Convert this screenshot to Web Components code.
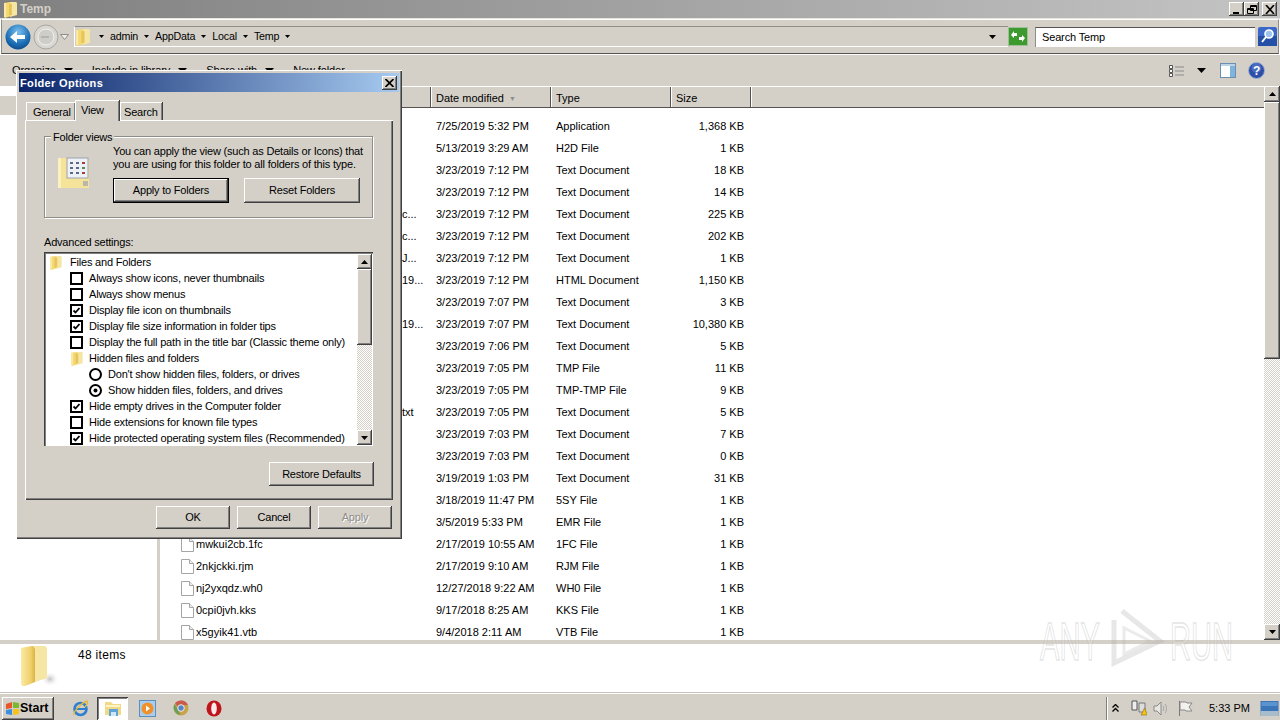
<!DOCTYPE html>
<html>
<head>
<meta charset="utf-8">
<title>Temp</title>
<style>
  html, body { margin: 0; height: 720px; overflow: hidden; background: #fff; }
  body { font: 11px/13px "Liberation Sans", Arial, sans-serif; color: #000; }
</style>
</head>
<body>
<explorer-window>
  <win-titlebar slot="title">Temp</win-titlebar>
  <address-bar></address-bar>
  <command-bar></command-bar>
  <file-list></file-list>
  <details-pane>48 items</details-pane>
  <task-bar></task-bar>
</explorer-window>
<folder-options>
  <opt-row kind="folder" root>Files and Folders</opt-row>
  <opt-row kind="check">Always show icons, never thumbnails</opt-row>
  <opt-row kind="check">Always show menus</opt-row>
  <opt-row kind="check" checked>Display file icon on thumbnails</opt-row>
  <opt-row kind="check" checked>Display file size information in folder tips</opt-row>
  <opt-row kind="check">Display the full path in the title bar (Classic theme only)</opt-row>
  <opt-row kind="folder">Hidden files and folders</opt-row>
  <opt-row kind="radio">Don't show hidden files, folders, or drives</opt-row>
  <opt-row kind="radio" checked>Show hidden files, folders, and drives</opt-row>
  <opt-row kind="check" checked>Hide empty drives in the Computer folder</opt-row>
  <opt-row kind="check">Hide extensions for known file types</opt-row>
  <opt-row kind="check" checked>Hide protected operating system files (Recommended)</opt-row>
</folder-options>
<any-watermark></any-watermark>

<script>
const files = [
  ["", "7/25/2019 5:32 PM", "Application", "1,368 KB"],
  ["", "5/13/2019 3:29 AM", "H2D File", "1 KB"],
  ["", "3/23/2019 7:12 PM", "Text Document", "18 KB"],
  ["", "3/23/2019 7:12 PM", "Text Document", "14 KB"],
  ["c...", "3/23/2019 7:12 PM", "Text Document", "225 KB"],
  ["c...", "3/23/2019 7:12 PM", "Text Document", "202 KB"],
  ["J...", "3/23/2019 7:12 PM", "Text Document", "1 KB"],
  ["19...", "3/23/2019 7:12 PM", "HTML Document", "1,150 KB"],
  ["", "3/23/2019 7:07 PM", "Text Document", "3 KB"],
  ["19...", "3/23/2019 7:07 PM", "Text Document", "10,380 KB"],
  ["", "3/23/2019 7:06 PM", "Text Document", "5 KB"],
  ["", "3/23/2019 7:05 PM", "TMP File", "11 KB"],
  ["", "3/23/2019 7:05 PM", "TMP-TMP File", "9 KB"],
  ["txt", "3/23/2019 7:05 PM", "Text Document", "5 KB"],
  ["", "3/23/2019 7:03 PM", "Text Document", "7 KB"],
  ["", "3/23/2019 7:03 PM", "Text Document", "0 KB"],
  ["", "3/19/2019 1:03 PM", "Text Document", "31 KB"],
  ["", "3/18/2019 11:47 PM", "5SY File", "1 KB"],
  ["", "3/5/2019 5:33 PM", "EMR File", "1 KB"],
  ["mwkui2cb.1fc", "2/17/2019 10:55 AM", "1FC File", "1 KB"],
  ["2nkjckki.rjm", "2/17/2019 9:10 AM", "RJM File", "1 KB"],
  ["nj2yxqdz.wh0", "12/27/2018 9:22 AM", "WH0 File", "1 KB"],
  ["0cpi0jvh.kks", "9/17/2018 8:25 AM", "KKS File", "1 KB"],
  ["x5gyik41.vtb", "9/4/2018 2:11 AM", "VTB File", "1 KB"],
];

const FACE = "#d4d0c8";
const RAISED = "box-shadow: inset -1px -1px #404040, inset 1px 1px #fff, inset -2px -2px #808080;";
const DITHER = "background: repeating-conic-gradient(#fff 0 25%, #d4d0c8 0 50%) 0 0 / 2px 2px;";

const folderSmall = (w = 14, h = 17) => `
  <svg width="${w}" height="${h}" viewBox="0 0 14 17" style="display:block;flex:none">
    <path d="M7 1h6l1 1v12l-7 2z" fill="#f5e6a4"/>
    <path d="M1 2l6-1 1 1v13l-6 2-1-1z" fill="#f4d873"/>
    <path d="M6 3h3v11H6z" fill="#e3b94a" opacity=".7"/>
    <path d="M1 2h2v14H1z" fill="#fbeeb4" opacity=".8"/>
  </svg>`;

const tri = (w = 7, h = 4) => `<svg width="${w}" height="${h}" viewBox="0 0 7 4" preserveAspectRatio="none" style="display:block;flex:none"><path d="M0 0h7L3.500 4z" fill="#000"/></svg>`;

// a plain class that only stamps markup into an open shadow root
class Stamp extends HTMLElement {
  connectedCallback() {
    if (this.shadowRoot) return;
    this.attachShadow({ mode: "open" }).innerHTML = this.markup();
  }
}

class ExplorerWindow extends Stamp {
  markup() {
    return `<style>
      :host { display: flex; flex-direction: column; width: 1280px; height: 720px; }
    </style><slot name="title"></slot><slot></slot>`;
  }
}

class WinTitlebar extends Stamp {
  markup() {
    return `<style>
      :host { display: flex; align-items: center; height: 19px; flex: none; box-sizing: border-box; padding-left: 3px; gap: 3px;
        background: linear-gradient(90deg, #808080, #c4c4c4); border-bottom: 1px solid #e6e4df;
        color: #d4d0c8; font-weight: bold; font-size: 12px; }
      .btns { margin-left: auto; display: flex; margin-right: 3px; }
      .b { width: 15px; height: 14px; background: ${FACE}; ${RAISED} display: flex; align-items: center; justify-content: center; }
      .b:last-child { margin-left: 3px; }
    </style>
    ${folderSmall(14, 17)}<slot></slot>
    <div class="btns">
      <div class="b"><svg width="10" height="9"><path d="M1 7h6v2H1z" fill="#000"/></svg></div>
      <div class="b"><svg width="10" height="9"><path d="M3.500.5h6v5h-6zM3 1.500h7M.5 3.500h6v5h-6zM0 4.500h7" fill="none" stroke="#000"/></svg></div>
      <div class="b"><svg width="10" height="9"><path d="M1 0l8 9M9 0L1 9" stroke="#000" stroke-width="1.600"/></svg></div>
    </div>`;
  }
}

class AddressBar extends Stamp {
  markup() {
    const crumb = (t) => `<span class="tri">${tri(5, 3)}</span><span class="c">${t}</span>`;
    return `<style>
      :host { display: flex; align-items: center; height: 35px; flex: none; margin: 0 1px; box-sizing: border-box;
        background: ${FACE}; border: 1px solid #8f8d88; border-top-color: #fff; border-bottom-color: #55534f; }
      .back { margin-left: 3px; }
      .fwd { margin-left: 2px; }
      .drop { margin-left: 1px; }
      .crumbs { display: flex; align-items: center; width: 934px; height: 21px; margin-left: 5px; box-sizing: border-box;
        border-top: 1px solid #8f8d88; border-bottom: 1px solid #fff; border-left: 1px solid #fff; letter-spacing: -.2px; font-size: 10.700px; }
      .crumbs > svg:first-child { margin-right: 9px; }
      .tri { margin-right: 6px; }
      .c { margin-right: 6px; }
      .arrow { margin-left: auto; margin-right: 12px; }
      .search { width: 220px; height: 20px; box-sizing: border-box; margin-left: 7px; background: #fff; border-top: 1px solid #55534f; border-left: 1px solid #8f8d88;
        padding: 3px 0 0 6px; letter-spacing: -.15px; }
      .go { margin-left: 3px; }
    </style>
    <svg class="back" width="26" height="26" viewBox="0 0 26 26">
      <defs><radialGradient id="bl" cx=".5" cy=".3" r=".8"><stop offset="0" stop-color="#7cc0ee"/><stop offset=".6" stop-color="#1c6fb5"/><stop offset="1" stop-color="#0a3f7c"/></radialGradient></defs>
      <circle cx="13" cy="13" r="12.500" fill="url(#bl)"/>
      <path d="M5 13l7-6v4h8v4h-8v4z" fill="#fff"/>
    </svg>
    <svg class="fwd" width="26" height="26" viewBox="0 0 26 26">
      <circle cx="13" cy="13" r="12" fill="#d9d7d2" stroke="#a6a5a1"/>
      <circle cx="13" cy="13" r="8" fill="#cfcdc8" stroke="#f2f1ef"/>
      <path d="M8 12h8v2H8z" fill="#b5b4b0"/>
    </svg>
    <svg class="drop" width="9" height="6" viewBox="0 0 9 6"><path d="M.5.500h8L4.500 5.500z" fill="#eee" stroke="#8f8d88"/></svg>
    <div class="crumbs">
      ${folderSmall(15, 18)}
      ${crumb("admin")}${crumb("AppData")}${crumb("Local")}${crumb("Temp")}
      <span class="tri">${tri(5, 3)}</span>
      <span class="arrow">${tri()}</span>
    </div>
    <svg width="20" height="19" viewBox="0 0 20 19">
      <rect x=".5" y=".5" width="19" height="18" fill="#3d9a2e" stroke="#9fbf98"/>
      <path d="M3 8l3-4v2h3v3H6v2zM17 11l-3 4v-2h-3v-3h3V8z" fill="#fff"/>
    </svg>
    <div class="search">Search Temp</div>
    <svg class="go" width="19" height="19" viewBox="0 0 19 19">
      <rect width="19" height="19" rx="2" fill="#3a68c8"/><rect y="9" width="19" height="10" fill="#2450a8"/>
      <circle cx="11" cy="7" r="4" fill="#9cc4ef" stroke="#fff" stroke-width="1.600"/>
      <path d="M8 10l-4 5" stroke="#fff" stroke-width="2"/>
    </svg>`;
  }
}

class CommandBar extends Stamp {
  markup() {
    return `<style>
      :host { display: flex; align-items: center; height: 32px; flex: none; background: ${FACE}; padding-left: 12px; box-sizing: border-box; border-top: 1px solid #fff; letter-spacing: -.1px; }
      .m { display: flex; align-items: center; gap: 8px; margin-right: 19px; }
      .r { margin-left: auto; display: flex; align-items: center; margin-right: 15px; }
    </style>
    <div class="m">Organize ${tri(9, 5)}</div>
    <div class="m">Include in library ${tri(9, 5)}</div>
    <div class="m">Share with ${tri(9, 5)}</div>
    <div class="m">New folder</div>
    <div class="r">
      <svg width="16" height="14" viewBox="0 0 16 14">
        <path d="M.5 1.500h3v3h-3zM.5 5.500h3v3h-3zM.5 9.500h3v3h-3z" fill="#fff" stroke="#555"/>
        <path d="M6 3h9M6 7h9M6 11h9" stroke="#8a8a8a"/>
      </svg>
      <span style="margin-left:12px">${tri(9, 5)}</span>
      <svg style="margin-left:14px" width="16" height="15" viewBox="0 0 16 15">
        <rect x=".5" y=".5" width="15" height="14" fill="#fff" stroke="#6b8fb0"/>
        <rect x="10" y="1" width="5" height="13" fill="#7fb4dc"/><rect x="1" y="1" width="14" height="2" fill="#bcd4e6"/>
      </svg>
      <svg style="margin-left:12px" width="17" height="17" viewBox="0 0 17 17">
        <circle cx="8.500" cy="8.500" r="8" fill="#2e4fa8" stroke="#9eaed6"/>
        <circle cx="8.500" cy="6" r="5" fill="#5a7fd0" opacity=".6"/>
        <text x="8.500" y="13" text-anchor="middle" font-family="Liberation Sans" font-weight="bold" font-size="12" fill="#fff">?</text>
      </svg>
    </div>`;
  }
}

class ScrollBar extends Stamp {
  markup() {
    const thumb = this.getAttribute("thumb");
    const w = this.getAttribute("size") || 16;
    const arrow = (d) => `<div class="btn"><svg width="7" height="4" viewBox="0 0 7 4"><path d="${d}" fill="#000"/></svg></div>`;
    return `<style>
      :host { display: flex; flex-direction: column; flex: none; width: ${w}px; }
      .btn { height: ${w}px; flex: none; background: ${FACE}; ${RAISED} display: flex; align-items: center; justify-content: center; }
      .thumb { height: ${thumb}px; flex: none; background: ${FACE}; ${RAISED} }
      .track { flex: 1; ${DITHER} }
    </style>
    ${arrow("M3.500 0L7 4H0z")}<div class="thumb"></div><div class="track"></div>${arrow("M0 0h7L3.500 4z")}`;
  }
}

class FileList extends Stamp {
  markup() {
    const cols = "grid-template-columns: 271px 120px 120px 80px;";
    const fileIcon = `<svg class="fi" width="13" height="15" viewBox="0 0 13 15"><path d="M.5.500h8l4 4v10H.500z" fill="#fff" stroke="#a5a5a5"/><path d="M8.500.500v4h4" fill="#eee" stroke="#a5a5a5"/></svg>`;
    const rows = files.map(([name, date, type, size]) => {
      // short names are the ends of long ones, the dialog hides the rest
      const whole = name.length > 5;
      return `<div class="row">
        <div class="name ${name && !whole ? "tail" : ""}">${whole ? fileIcon : ""}<span>${name}</span></div>
        <div class="cell">${date}</div><div class="cell">${type}</div><div class="cell size">${size}</div>
      </div>`;
    }).join("");
    return `<style>
      :host { display: flex; flex: 1; min-height: 0; background: #fff; }
      nav { width: 157px; flex: none; padding-top: 10px; box-sizing: border-box; }
      .tile { width: 18px; height: 19px; background: ${FACE}; }
      .split { width: 3px; flex: none; background: ${FACE}; }
      main { flex: 1; display: flex; flex-direction: column; min-width: 0; overflow: hidden; }
      .head { display: grid; height: 22px; flex: none; box-sizing: border-box; background: ${FACE};
        border-top: 1px solid #fff; border-bottom: 1px solid #55534f; }
      .head div { box-sizing: border-box; padding: 5px 0 0 5px; border-right: 1px solid #55534f; box-shadow: 1px 0 #fff; display: flex; gap: 5px; }
      .head .fill { border: 0; box-shadow: none; }
      .sort { color: #8f8d88; font-size: 7px; }
      .rows { padding-top: 7px; flex: 1; overflow: hidden; }
      .row { display: grid; ${cols} height: 22px; align-items: center; }
      .cell { padding-left: 5px; white-space: nowrap; }
      .size { text-align: right; padding-right: 7px; }
      .name { position: relative; padding-left: 36px; white-space: nowrap; }
      .name.tail { padding-left: 242px; }
      .fi { position: absolute; left: 21px; top: -1px; }
    </style>
    <nav><div class="tile"></div></nav>
    <div class="split"></div>
    <main>
      <div class="head" style="grid-template-columns: 271px 120px 120px 80px 1fr">
        <div>Name</div>
        <div>Date modified <span class="sort">&#9660;</span></div>
        <div>Type</div>
        <div>Size</div>
        <div class="fill"></div>
      </div>
      <div class="rows">${rows}</div>
    </main>
    <scroll-bar thumb="257"></scroll-bar>`;
  }
}

class DetailsPane extends Stamp {
  markup() {
    return `<style>
      :host { display: flex; flex: none; height: 53px; box-sizing: border-box; background: #fff; border-top: 4px solid ${FACE}; border-bottom: 1px solid #c6c3bc; padding-left: 20px; font-size: 12px; }
      svg { margin-top: 1px; }
      div { margin: 5px 0 0 20px; letter-spacing: .3px; }
    </style>
    <svg width="38" height="45" viewBox="0 0 38 45">
      <defs>
        <linearGradient id="f" x1="0" x2="1"><stop offset="0" stop-color="#fbe9a4"/><stop offset=".7" stop-color="#efcf6a"/><stop offset="1" stop-color="#d9b24a"/></linearGradient>
        <radialGradient id="s"><stop offset="0" stop-color="#9a9a9a" stop-opacity=".6"/><stop offset="1" stop-color="#fff" stop-opacity="0"/></radialGradient>
      </defs>
      <ellipse cx="30" cy="34" rx="9" ry="8" fill="url(#s)"/>
      <path d="M10 1h15l2 2v30l-12 4z" fill="#f6e6a4"/>
      <path d="M1 3c5-1 9-2 12-2l2 3v33c-5 2-9 4-12 4-1 0-2-1-2-3z" fill="url(#f)"/>
    </svg>
    <div><slot></slot></div>`;
  }
}

class TaskBar extends Stamp {
  markup() {
    return `<style>
      :host { display: flex; align-items: center; height: 27px; flex: none; box-sizing: border-box; background: ${FACE}; border-top: 1px solid #fff; padding: 2px 0 0 2px; }
      .start { width: 52px; height: 23px; box-sizing: border-box; background: ${FACE}; ${RAISED} display: flex; align-items: center; padding-left: 3px; font: bold 12.500px "Liberation Sans", sans-serif; }
      .apps { display: flex; align-items: center; margin-left: 18px; }
      .apps > * { flex: none; }
      .active { width: 31px; height: 23px; margin: 0 11px 0 8px; box-sizing: border-box; display: flex; align-items: center; justify-content: center;
        background: #fff; box-shadow: inset 1px 1px #404040, inset -1px -1px #fff, inset 2px 2px #808080; }
      .tray { margin-left: auto; display: flex; align-items: center; height: 23px; box-sizing: border-box; border-left: 1px solid #808080; box-shadow: inset 1px 0 #fff; width: 174px; padding-left: 5px; }
      .time { margin-left: 16px; white-space: nowrap; flex: none; width: 40px; }
      .tray svg { flex: none; }
    </style>
    <div class="start">
      <svg width="15" height="15" viewBox="0 0 15 15">
        <path d="M1 3l6-2v6L1 8z" fill="#e8562a"/><path d="M8 1l6 1v5l-6 0z" fill="#7cb82f"/>
        <path d="M1 9l6-1v6l-6-1z" fill="#3d8ee0"/><path d="M8 8h6v5l-6 1z" fill="#f6c21c"/>
      </svg>Start
    </div>
    <div class="apps">
      <svg width="17" height="17" viewBox="0 0 17 17">
        <circle cx="8.500" cy="9" r="6" fill="none" stroke="#2f7fd0" stroke-width="2.600"/>
        <path d="M3 9h11" stroke="#2f7fd0" stroke-width="2"/>
        <path d="M2 15C1 12 9 3 15 1c1 2-1 5-2 6" fill="none" stroke="#e2b93a" stroke-width="1.400"/>
      </svg>
      <div class="active">
        <svg width="18" height="17" viewBox="0 0 18 17">
          <path d="M1 2h6l2 2h8v11H1z" fill="#f0d987"/><path d="M2 5h14v2H2z" fill="#fdf3c5"/>
          <path d="M5 9h9v7H5z" fill="#5fa3d8"/><path d="M7 12h5v4H7z" fill="#cfe6f6"/>
        </svg>
      </div>
      <svg width="17" height="17" viewBox="0 0 17 17">
        <rect x=".5" y=".5" width="16" height="16" fill="#a9cdea" stroke="#5a8fc0"/>
        <circle cx="8.500" cy="8.500" r="6" fill="#f0902a"/>
        <path d="M7 5.500l4 3-4 3z" fill="#fff"/>
      </svg>
      <svg width="16" height="16" viewBox="0 0 16 16" style="margin-left:17px">
        <circle cx="8" cy="8" r="7.500" fill="#c9a24a"/>
        <path d="M8 .5A7.500 7.500 0 0 1 15 5H8a3 3 0 0 0-3 2L2 3A7.500 7.500 0 0 1 8 .5z" fill="#c95a4c"/>
        <path d="M1.500 4l3 5 3 6A7.500 7.500 0 0 1 1.500 4z" fill="#6a9e5a"/>
        <circle cx="8" cy="8" r="3.300" fill="#5a83c4" stroke="#eee"/>
      </svg>
      <svg width="16" height="17" viewBox="0 0 16 17" style="margin-left:17px">
        <ellipse cx="8" cy="8.500" rx="7.500" ry="8" fill="#c0141c"/>
        <ellipse cx="8" cy="8.500" rx="2.800" ry="6" fill="#fbeaea"/>
      </svg>
    </div>
    <div class="tray">
      <svg width="7" height="8" viewBox="0 0 7 8"><path d="M.5 3.500l3-3 3 3M.5 7.500l3-3 3 3" fill="none" stroke="#000" stroke-width="1.300"/></svg>
      <svg width="17" height="16" viewBox="0 0 17 16" style="margin-left:11px">
        <path d="M2 1h5v9H2z" fill="#eee" stroke="#555"/><path d="M9 3h6v9H9z" fill="#ddd" stroke="#777"/>
        <path d="M11 15l3.500-7 3 7z" fill="#f2c21a" stroke="#8a6b10" stroke-width=".6"/>
      </svg>
      <svg width="15" height="15" viewBox="0 0 15 15" style="margin-left:6px">
        <path d="M1 5h3l4-4v13l-4-4H1z" fill="#e8e6e1" stroke="#8a8a8a"/>
        <path d="M10 5c1 1 1 4 0 5M12 3c2 2 2 7 0 9" fill="none" stroke="#a8a8a8"/>
      </svg>
      <svg width="16" height="16" viewBox="0 0 16 16" style="margin-left:9px">
        <path d="M2.500 1v15" stroke="#777"/><path d="M3 2h6l1 1h5l-3 4 3 4H9l-1-1H3z" fill="#f2f1ee" stroke="#888"/>
      </svg>
      <span class="time">5:33 PM</span>
      <svg width="19" height="15" viewBox="0 0 18 15" style="margin-left:11px">
        <rect width="18" height="15" fill="#3a75b8"/><rect y="10" width="18" height="5" fill="#a9bccb"/>
        <rect x="1" y="1" width="16" height="4" fill="#5b93cf"/>
      </svg>
    </div>`;
  }
}

class WinButton extends Stamp {
  markup() {
    return `<style>
      :host { display: flex; align-items: center; justify-content: center; box-sizing: border-box; background: ${FACE}; ${RAISED} flex: none; }
      :host([default]) { border: 1px solid #000; }
      :host([disabled]) { color: #8f8d88; text-shadow: 1px 1px #fff; }
    </style><slot></slot>`;
  }
}

class OptRow extends Stamp {
  markup() {
    const kind = this.getAttribute("kind");
    const checked = this.hasAttribute("checked");
    const root = this.hasAttribute("root");
    let icon = "";
    let pad = 24;
    let gap = 6;
    if (kind === "folder") {
      icon = folderSmall(13, 15);
      if (root) { pad = 3; gap = 8; }
    } else if (kind === "check") {
      icon = `<svg width="13" height="13" viewBox="0 0 13 13" style="display:block;flex:none"><rect x="1" y="1" width="11" height="11" fill="#fff" stroke="#000" stroke-width="2"/>${checked ? '<path d="M3.500 6.500l2 2 4-4.500" fill="none" stroke="#000" stroke-width="1.800"/>' : ""}</svg>`;
    } else {
      pad = 43;
      icon = `<svg width="13" height="13" viewBox="0 0 13 13" style="display:block;flex:none"><circle cx="6.500" cy="6.500" r="5.500" fill="#fff" stroke="#000" stroke-width="2"/>${checked ? '<circle cx="6.500" cy="6.500" r="2" fill="#000"/>' : ""}</svg>`;
    }
    return `<style>
      :host { display: flex; align-items: center; height: 16px; padding-left: ${pad}px; gap: ${gap}px; white-space: nowrap; letter-spacing: -.2px; }
    </style>${icon}<span><slot></slot></span>`;
  }
}

class FolderOptions extends Stamp {
  markup() {
    return `<style>
      :host { position: absolute; left: 16px; top: 70px; width: 386px; height: 469px; box-sizing: border-box; background: ${FACE};
        display: flex; flex-direction: column; padding: 3px; letter-spacing: -.2px;
        box-shadow: inset 1px 1px #fff, inset -1px -1px #404040, inset -2px -2px #808080; }
      .title { height: 19px; flex: none; display: flex; align-items: center; padding: 1px 0 0 1px; box-sizing: border-box; background: linear-gradient(90deg, #0a246a, #a6caf0);
        color: #fff; font: bold 11px/13px "Liberation Sans", sans-serif; letter-spacing: .35px; }
      .close { margin: -1px 2px 0 auto; width: 15px; height: 14px; background: ${FACE}; ${RAISED} display: flex; align-items: center; justify-content: center; }
      .tabs { display: flex; align-items: flex-end; height: 28px; margin-left: 7px; flex: none; position: relative; }
      .tab { height: 18px; box-sizing: border-box; background: ${FACE}; padding: 3px 0 0 6px; border-top: 1px solid #fff; border-left: 1px solid #fff; box-shadow: inset -1px 0 #808080, 1px 0 #404040; }
      .tab.on { height: 21px; padding: 3px 0 0 5px; position: relative; z-index: 1; top: 1px; }
      .panel { width: 368px; height: 380px; margin-left: 6px; box-sizing: border-box; flex: none; padding: 16px 19px 0;
        box-shadow: inset 1px 1px #fff, inset -1px -1px #404040, inset -2px -2px #808080; }
      .group { position: relative; width: 329px; height: 82px; box-sizing: border-box; border: 1px solid #8f8d88; box-shadow: 1px 1px #fff, inset 1px 1px #fff;
        display: flex; padding: 8px 0 0 12px; }
      .legend { position: absolute; left: 6px; top: -6px; background: ${FACE}; padding: 0 2px 0 2px; }
      .gicon { width: 56px; flex: none; padding-top: 10px; }
      .gbody { display: flex; flex-direction: column; white-space: nowrap; }
      .gbtns { display: flex; gap: 15px; margin-top: 7px; }
      .gbtns win-button { width: 116px; height: 25px; }
      .adv { margin-top: 18px; }
      .tree { display: flex; width: 329px; height: 194px; margin-top: 3px; box-sizing: border-box; background: #fff; padding: 2px 1px 1px 2px;
        box-shadow: inset 1px 1px #404040, inset 2px 2px #808080, inset -1px -1px #fff; overflow: hidden; }
      .items { flex: 1; min-width: 0; overflow: hidden; }
      .restore { display: flex; justify-content: flex-end; margin-top: 16px; }
      .restore win-button { width: 105px; height: 24px; }
      .foot { display: flex; justify-content: flex-end; gap: 7px; margin: 6px 7px 0 0; }
      .foot win-button { width: 74px; height: 23px; }
    </style>
    <div class="title">Folder Options
      <div class="close"><svg width="9" height="8"><path d="M.5 0l8 8M8.500 0l-8 8" stroke="#000" stroke-width="1.700"/></svg></div>
    </div>
    <div class="tabs">
      <div class="tab" style="width:49px">General</div>
      <div class="tab on" style="width:44px">View</div>
      <div class="tab" style="width:42px;margin-left:1px;padding-left:3px">Search</div>
    </div>
    <div class="panel">
      <div class="group">
        <span class="legend">Folder views</span>
        <div class="gicon">
          <svg width="33" height="35" viewBox="0 0 33 35" style="display:block">
            <path d="M1 3h24l7 2v28H1z" fill="#f6e39a"/><path d="M1 3h3v30H1z" fill="#fbf0c0"/>
            <rect x="10" y="3" width="21" height="20" fill="#eef1f5" stroke="#9aa3ad"/>
            <path d="M13 7h3v2h-3zM19 7h3v2h-3zM13 12h3v2h-3zM19 12h3v2h-3zM13 17h3v2h-3zM19 17h3v2h-3z" fill="#5a6b8a"/>
            <path d="M25 7h3v2h-3zM25 17h3v2h-3z" fill="#a8403a"/><path d="M25 12h3v2h-3z" fill="#5a8a50"/>
            <rect x="26" y="26" width="5" height="5" fill="#b8b8a8"/>
          </svg>
        </div>
        <div class="gbody">
          <div>You can apply the view (such as Details or Icons) that<br>you are using for this folder to all folders of this type.</div>
          <div class="gbtns">
            <win-button default>Apply to Folders</win-button>
            <win-button>Reset Folders</win-button>
          </div>
        </div>
      </div>
      <div class="adv">Advanced settings:</div>
      <div class="tree">
        <div class="items"><slot></slot></div>
        <scroll-bar thumb="76" size="15"></scroll-bar>
      </div>
      <div class="restore"><win-button>Restore Defaults</win-button></div>
    </div>
    <div class="foot">
      <win-button>OK</win-button>
      <win-button>Cancel</win-button>
      <win-button disabled>Apply</win-button>
    </div>`;
  }
}

class AnyWatermark extends Stamp {
  markup() {
    return `<style>
      :host { position: absolute; left: 1040px; top: 608px; display: flex; align-items: center; height: 66px; pointer-events: none;
        color: rgba(255,255,255,.15); -webkit-text-stroke: 1.500px rgba(170,170,170,.32); font: 53px/53px "Liberation Sans", sans-serif; }
      span { display: inline-block; transform: scaleX(.55); transform-origin: 0 50%; width: 60px; white-space: nowrap; }
      svg { margin: 0 4px 0 8px; }
    </style>
    <span>ANY</span>
    <svg width="58" height="66" viewBox="0 0 58 66">
      <path d="M6 12V55L52 33 14 3" fill="none" stroke="rgba(170,170,170,.28)" stroke-width="5"/>
      <path d="M16 20V46L42 33z" fill="none" stroke="rgba(170,170,170,.24)" stroke-width="3"/>
    </svg>
    <span>RUN</span>`;
  }
}

customElements.define("explorer-window", ExplorerWindow);
customElements.define("win-titlebar", WinTitlebar);
customElements.define("address-bar", AddressBar);
customElements.define("command-bar", CommandBar);
customElements.define("scroll-bar", ScrollBar);
customElements.define("file-list", FileList);
customElements.define("details-pane", DetailsPane);
customElements.define("task-bar", TaskBar);
customElements.define("win-button", WinButton);
customElements.define("opt-row", OptRow);
customElements.define("folder-options", FolderOptions);
customElements.define("any-watermark", AnyWatermark);
</script>
</body>
</html>
